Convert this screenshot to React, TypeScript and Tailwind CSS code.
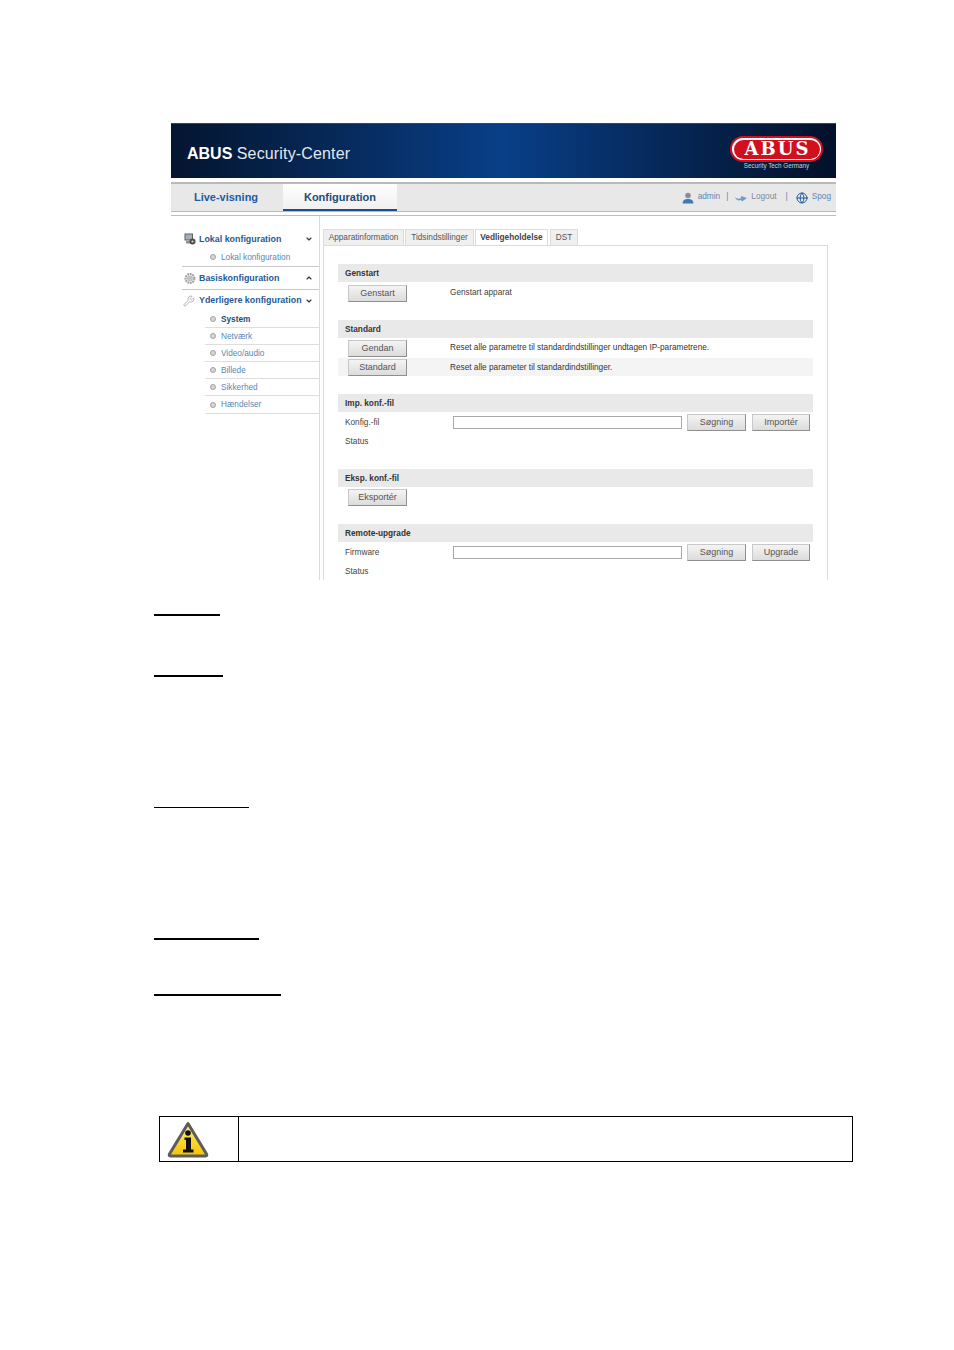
import { Wrench, Globe, ChevronDown, ChevronUp } from "lucide-react";

const subItems = ["System", "Netværk", "Video/audio", "Billede", "Sikkerhed", "Hændelser"];

const Bullet = () => (
  <span className="w-[6px] h-[6px] rounded-full bg-[#d6d6d6] border border-[#a3a3a3] shrink-0" />
);

const SectionHeader = ({ title, top }: { title: string; top: string }) => (
  <div className={`h-[18px] bg-[#e9e9e9] flex items-center pl-[7px] pt-[2px] font-bold text-[#333] ${top}`}>
    {title}
  </div>
);

const Btn = ({ label, width = "w-[59px]", height = "h-[17px]" }: { label: string; width?: string; height?: string }) => (
  <button
    className={`${width} ${height} shrink-0 flex items-center justify-center text-[9px] text-[#555] border border-[#8f8f8f] border-t-[#c8c8c8] border-l-[#c8c8c8] bg-linear-to-b from-[#f4f4f4] to-[#dcdcdc]`}
  >
    {label}
  </button>
);

const FileRow = ({ label, action }: { label: string; action: string }) => (
  <div className="h-[20px] flex items-center pl-[7px]">
    <span className="w-[108px] pt-[2px] text-[#444]">{label}</span>
    <span className="w-[229px] h-[13px] border border-[#a8a8a8] bg-white shrink-0" />
    <span className="ml-[5px]"><Btn label="Søgning" /></span>
    <span className="ml-[6px]"><Btn label={action} width="w-[58px]" /></span>
  </div>
);

const AbusLogo = () => (
  <div className="flex flex-col items-center mr-[13px] pt-[12px]">
    <div className="w-[93px] h-[26px] rounded-full bg-[#d0101f] p-[2px]">
      <div className="w-full h-full rounded-full bg-white p-[1.5px]">
        <div className="w-full h-full rounded-full bg-[#d0101f] flex items-center justify-center">
          <span className="font-['DejaVu_Serif',serif] font-bold text-[18px] leading-none text-white tracking-[2px] pl-[2px]">ABUS</span>
        </div>
      </div>
    </div>
    <span className="text-[6.3px] leading-[8px] text-[#c9d3df] whitespace-nowrap">Security Tech Germany</span>
  </div>
);

const App = () => {
  return (
    <div className="h-[1350px] bg-white pt-[123px] font-['Liberation_Sans',Arial,sans-serif] overflow-hidden">
      <div className="ml-[171px] w-[665px]">
        {/* banner */}
        <div className="h-[55px] flex justify-between border-t border-[#3a4656] bg-linear-to-r from-[#041530] via-[#083f88] to-[#03112a]">
          <div className="pl-[16px] pt-[20px] text-[16px] leading-[19px] text-white">
            <span className="font-bold">ABUS</span> <span className="text-[#e4e8ee] tracking-[0.15px]">Security-Center</span>
          </div>
          <AbusLogo />
        </div>

        {/* nav */}
        <div className="mt-[4px] h-[30px] bg-[#e8e8e8] border-t-2 border-b border-t-[#b9b9b9] border-b-[#b9b9b9] flex items-stretch">
          <div className="w-[112px] pr-[2px] flex items-center justify-center text-[11px] font-bold text-[#1d5c9f]">
            Live-visning
          </div>
          <div className="w-[114px] pt-[2px] bg-linear-to-b from-white to-[#f0f0f0] border-b-2 border-[#1e4c8c] flex items-center justify-center text-[11px] font-bold text-[#1f4a78]">
            Konfiguration
          </div>
          <div className="flex-1 flex items-center justify-end text-[8.25px] text-[#5b86b5] pr-[5px]">
            <svg width="12" height="12" viewBox="0 0 12 12" className="mr-[4px]">
              <circle cx="6" cy="3.5" r="2.8" fill="#8a8f96" />
              <path d="M0.5 11.5 C1 7.5 3.5 7 6 7 S11 7.5 11.5 11.5 Z" fill="#3f78b8" />
            </svg>
            <span>admin</span>
            <span className="ml-[6px] mr-[7px]">|</span>
            <svg width="12" height="8" viewBox="0 0 12 8" className="mr-[4px]">
              <path d="M0 3 C2 5 4 5 6 4 L6 2 L12 4 L7 7.5 L6 6 C3 7 1 6 0 3 Z" fill="#6f9ccb" />
            </svg>
            <span className="text-[#7b8a9a]">Logout</span>
            <span className="ml-[9px] mr-[8px]">|</span>
            <Globe size={12} strokeWidth={2} className="text-[#1f5c9c] mr-[4px]" />
            <span>Spog</span>
          </div>
        </div>
        <div className="mt-[3px] h-[1px] bg-[#bdbdbd]" />

        {/* main */}
        <div className="h-[364px] flex text-[8.25px] leading-none">
          <div className="w-[149px] border-r border-[#dcdcdc] pl-[11px] pt-[14px] shrink-0">
            <div className="h-[18px] flex items-center text-[#1f5a96] font-bold text-[8.9px]">
              <svg width="12" height="12" viewBox="0 0 12 12" className="ml-[2px] mr-[3px] shrink-0">
                <rect x="0.5" y="0.5" width="8.5" height="7" fill="#5d6268" />
                <rect x="1.5" y="1.5" width="6.5" height="5" fill="#a9aeb4" />
                <rect x="2" y="8" width="6" height="2.5" fill="#8a8f95" />
                <circle cx="8.5" cy="8.5" r="3" fill="#4a4e53" />
                <circle cx="8.5" cy="8.5" r="1.1" fill="#d9d9d9" />
              </svg>
              <span className="flex-1">Lokal konfiguration</span>
              <ChevronDown size={8} strokeWidth={3.5} className="text-[#333] mr-[6px]" />
            </div>
            <div className="h-[19px] pl-[28px] flex items-center gap-[5px] border-b border-[#c9c9c9] text-[#5b86b5]">
              <Bullet />
              <span className="pt-[3px]">Lokal konfiguration</span>
            </div>
            <div className="h-[23px] flex items-center border-b border-[#c9c9c9] text-[#1f5a96] font-bold text-[8.9px]">
              <svg width="12" height="12" viewBox="0 0 12 12" className="ml-[2px] mr-[3px] shrink-0">
                <circle cx="6" cy="6.5" r="4.4" fill="none" stroke="#a3a3a3" strokeWidth="2.2" strokeDasharray="1.8 0.7" />
                <circle cx="6" cy="6.5" r="3" fill="#c4c4c4" />
              </svg>
              <span className="flex-1">Basiskonfiguration</span>
              <ChevronUp size={8} strokeWidth={3.5} className="text-[#333] mr-[6px]" />
            </div>
            <div className="h-[21px] flex items-center text-[#1f5a96] font-bold text-[8.9px]">
              <Wrench size={12} strokeWidth={1.3} className="text-[#8d8d8d] ml-[1px] mr-[4px] shrink-0" />
              <span className="flex-1 whitespace-nowrap">Yderligere konfiguration</span>
              <ChevronDown size={8} strokeWidth={3.5} className="text-[#333] mr-[6px]" />
            </div>
            <div className="ml-[23px]">
              {subItems.map((item, i) => (
                <div
                  key={item}
                  className={`${i === 5 ? "h-[18px]" : "h-[17px]"} pl-[5px] flex items-center gap-[5px] border-b border-[#dedede] ${
                    i === 0 ? "font-bold text-[#274a70]" : "text-[#5b86b5]"
                  }`}
                >
                  <Bullet />
                  <span className="pt-[2px]">{item}</span>
                </div>
              ))}
            </div>
          </div>

          <div className="pl-[3px] flex-1 pt-[13px] overflow-hidden">
            <div className="h-[16px] flex gap-[1px] text-[#555]">
              <div className="w-[81px] pt-[2px] bg-[#efefef] border border-b-0 border-[#dcdcdc] flex items-center justify-center">Apparatinformation</div>
              <div className="w-[69px] pt-[2px] bg-[#efefef] border border-b-0 border-[#dcdcdc] flex items-center justify-center">Tidsindstillinger</div>
              <div className="w-[73px] pt-[2px] bg-white border border-b-0 border-[#dcdcdc] flex items-center justify-center font-bold text-[#444]">Vedligeholdelse</div>
              <div className="w-[28px] pt-[2px] ml-[1px] bg-[#efefef] border border-b-0 border-[#dcdcdc] flex items-center justify-center">DST</div>
            </div>
            <div className="w-[505px] h-[335px] border border-b-0 border-[#dcdcdc] px-[14px] overflow-hidden">
              <SectionHeader title="Genstart" top="mt-[18px]" />
              <div className="mt-[3px] pl-[10px] flex items-center text-[#444]">
                <Btn label="Genstart" />
                <span className="ml-[43px] mb-[1px]">Genstart apparat</span>
              </div>

              <SectionHeader title="Standard" top="mt-[18px]" />
              <div className="h-[20px] pl-[10px] flex items-center text-[#333]">
                <Btn label="Gendan" />
                <span className="ml-[43px]">Reset alle parametre til standardindstillinger undtagen IP-parametrene.</span>
              </div>
              <div className="h-[18px] pl-[10px] flex items-center bg-[#f4f4f4] text-[#333]">
                <Btn label="Standard" />
                <span className="ml-[43px] pt-[2px]">Reset alle parameter til standardindstillinger.</span>
              </div>

              <SectionHeader title="Imp. konf.-fil" top="mt-[18px]" />
              <FileRow label="Konfig.-fil" action="Importér" />
              <div className="h-[18px] flex items-center pl-[7px] pt-[2px] text-[#444]">Status</div>

              <SectionHeader title="Eksp. konf.-fil" top="mt-[19px]" />
              <div className="mt-[2px] pl-[10px]">
                <Btn label="Eksportér" />
              </div>

              <SectionHeader title="Remote-upgrade" top="mt-[18px]" />
              <FileRow label="Firmware" action="Upgrade" />
              <div className="h-[18px] flex items-center pl-[7px] pt-[2px] text-[#444]">Status</div>
            </div>
          </div>
        </div>
      </div>

      {/* document rules, text is blanked out in the source */}
      <div className="ml-[154px] flex flex-col items-start">
        <div className="mt-[34px] w-[66px] h-[2px] bg-black" />
        <div className="mt-[59px] w-[69px] h-[2px] bg-black" />
        <div className="mt-[130px] w-[95px] h-[1px] bg-black" />
        <div className="mt-[130px] w-[105px] h-[2px] bg-black" />
        <div className="mt-[54px] w-[127px] h-[2px] bg-black" />
      </div>

      {/* info box */}
      <div className="mt-[120px] ml-[159px] w-[694px] h-[46px] border border-black flex">
        <div className="w-[79px] border-r border-black flex items-center pl-[7px]">
          <svg width="42" height="37" viewBox="0 0 42 37">
            <defs>
              <linearGradient id="warn" x1="0" y1="0" x2="0" y2="1">
                <stop offset="0" stopColor="#fff2a0" />
                <stop offset="0.5" stopColor="#fbd92f" />
                <stop offset="1" stopColor="#f4c20d" />
              </linearGradient>
            </defs>
            <path d="M21 2.5 L39.5 33 Q40.5 35 38 35 L4 35 Q1.5 35 2.5 33 Z" fill="url(#warn)" stroke="#5c5c5c" strokeWidth="3" strokeLinejoin="round" />
            <circle cx="21" cy="12" r="2.8" fill="#111" />
            <path d="M17.5 16.5 H24 V28.5 H26.5 V31.5 H16 V28.5 H19 V19 H17.5 Z" fill="#111" />
          </svg>
        </div>
        <div className="flex-1" />
      </div>
    </div>
  );
};

export default App;
